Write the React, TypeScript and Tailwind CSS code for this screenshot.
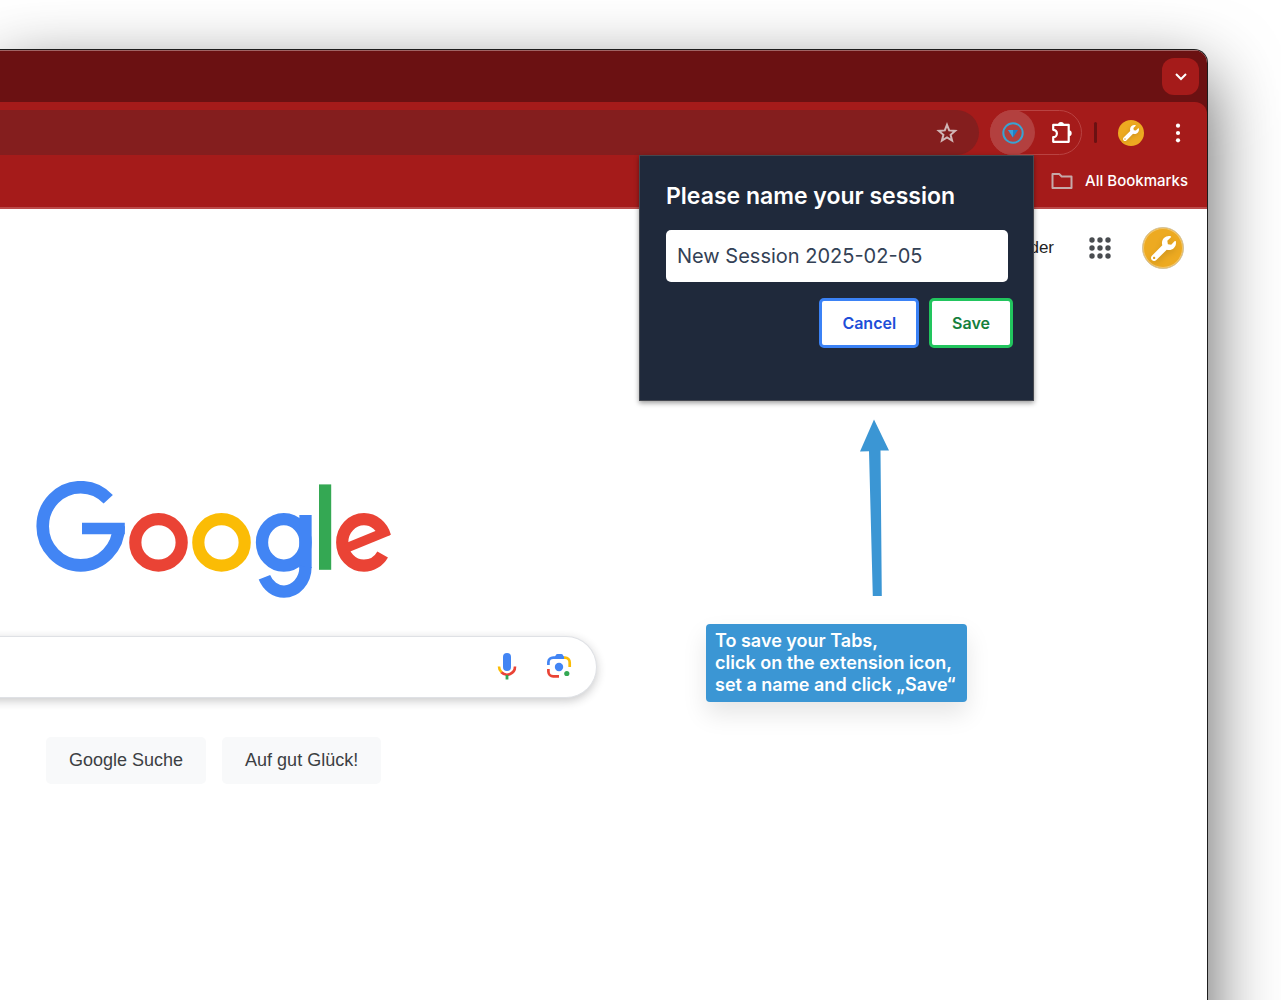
import { useState } from "react";
import { FaWrench } from "react-icons/fa";

const dots = [4, 12, 20];

function GoogleLogo() {
  return (
    <svg viewBox="36 481 355 117" className="h-[117px] w-[355px]" fill="none" role="img" aria-label="Google">
      <g stroke="#4285f4">
        <ellipse cx="80.7" cy="526.3" rx="38" ry="39.1" strokeWidth="12.6" pathLength="360" strokeDasharray="316 44" />
        <line x1="82" y1="528.5" x2="124.8" y2="528.5" strokeWidth="11.6" />
      </g>
      <circle cx="158.5" cy="542.4" r="23.2" stroke="#ea4335" strokeWidth="12.2" />
      <circle cx="221.5" cy="542.4" r="23.2" stroke="#fbbc05" strokeWidth="12.2" />
      <g stroke="#4285f4" strokeWidth="12.3">
        <ellipse cx="283.8" cy="542.4" rx="21.8" ry="23.2" />
        <line x1="305.5" y1="515" x2="305.5" y2="568" />
        <ellipse cx="284" cy="567" rx="21.5" ry="24.6" pathLength="360" strokeDasharray="154 206" />
      </g>
      <rect x="319" y="484.4" width="12.2" height="85.4" fill="#34a853" />
      <g stroke="#ea4335">
        <ellipse
          cx="364"
          cy="542.4"
          rx="21.8"
          ry="23.2"
          strokeWidth="12.2"
          pathLength="360"
          strokeDasharray="312 48"
          strokeDashoffset="-32"
        />
        <line x1="346" y1="548.2" x2="388.2" y2="530.8" strokeWidth="9.4" />
      </g>
    </svg>
  );
}

function MicIcon() {
  return (
    <svg viewBox="0 0 20 28" className="h-7 w-5" fill="none">
      <rect x="6" y="0" width="8" height="18" rx="4" fill="#4285f4" />
      <path d="M2 13.5a8 8 0 0 0 2.6 5.9" stroke="#fbbc05" strokeWidth="2.6" />
      <path d="M4.4 19.3A8 8 0 0 0 18 13.5" stroke="#ea4335" strokeWidth="2.6" />
      <path d="M10 22V26.5" stroke="#34a853" strokeWidth="2.8" />
    </svg>
  );
}

function LensIcon() {
  return (
    <svg viewBox="0 1 26 26" className="size-[26px]" fill="none">
      <path d="M2.4 12V9A4.8 4.8 0 0 1 7.2 4.6H18" stroke="#4285f4" strokeWidth="2.7" />
      <path d="M8 5l1.6-2.6Q10.3 1 11.6 1h3.6q1.3 0 2 1.4L18 5z" fill="#4285f4" />
      <path d="M18 4.6h1A4.8 4.8 0 0 1 23.7 9.4V14" stroke="#fbbc05" strokeWidth="2.7" />
      <path d="M2.4 16v2.8a4.8 4.8 0 0 0 4.8 4.6H13" stroke="#ea4335" strokeWidth="2.7" />
      <circle cx="13" cy="14" r="4.2" fill="#4285f4" />
      <circle cx="20.8" cy="20.5" r="2.6" fill="#34a853" />
    </svg>
  );
}

function StarIcon() {
  return (
    <svg viewBox="0 0 24 24" className="size-6" fill="none" stroke="#d0b5b5" strokeWidth="2">
      <path d="M12 3.800l2.200 5.600 6 .5-4.600 3.900 1.500 5.900-5.100-3.200-5.100 3.200 1.500-5.900-4.600-3.900 6-.5z" />
    </svg>
  );
}

function PuzzleIcon() {
  return (
    <svg viewBox="0 0 24 24" className="size-6" fill="none">
      <path
        d="M3.2 3.9H18.7V20.8H3.2V16.2A3.6 3.6 0 0 0 3.2 8.8Z"
        stroke="#fff"
        strokeWidth="2.2"
        strokeLinejoin="round"
      />
      <path d="M8 3.9a3 3 0 0 1 6 0zM18.7 9.3a3 3 0 0 1 0 6z" fill="#fff" />
    </svg>
  );
}

export default function App() {
  const [name, setName] = useState("New Session 2025-02-05");

  return (
    <div className="flex min-h-screen flex-col overflow-hidden bg-white pt-[49px] font-['Inter','Liberation_Sans',sans-serif]">
      <div className="relative -mb-24 mr-[73px] flex flex-1 flex-col rounded-tr-[14px] border-r border-t border-[#1c1c1c] bg-white shadow-[0_26px_70px_rgba(0,0,0,0.65)]">
        <header className="overflow-hidden rounded-tr-[13px] border-b-2 border-[#bb4b4a] bg-[#6b1112]">
          <div className="flex h-[52px] items-center justify-end border-t border-[#a06565] pr-2">
            <button aria-label="Search tabs" className="flex size-[37px] items-center justify-center rounded-xl bg-[#a51b1a]">
              <svg viewBox="0 0 12 8" className="h-2 w-3" fill="none" stroke="#fff" strokeWidth="2">
                <path d="M1 1l5 5 5-5" />
              </svg>
            </button>
          </div>
          <div className="rounded-tr-xl bg-[#a51b1a]">
            <div className="flex items-center pt-2">
              <div className="flex h-[45px] flex-1 items-center justify-end rounded-r-full bg-[#841e1e] pr-5">
                <button aria-label="Bookmark this tab">
                  <StarIcon />
                </button>
              </div>
              <div className="ml-[11px] flex h-[45px] w-[92px] items-center rounded-full border border-[#b94342]">
                <button
                  aria-label="Session extension"
                  className="-ml-px flex size-[45px] shrink-0 items-center justify-center rounded-full bg-[#b3403f]"
                >
                  <svg viewBox="0 0 22 22" className="size-[22px]" fill="none">
                    <circle cx="11" cy="11" r="9.7" stroke="#38a3d3" strokeWidth="2" />
                    <path d="M6 8h10l-5 7.5z" fill="#1f7fc6" />
                    <path d="M6 8h5v7.5z" fill="#3a9fdc" />
                  </svg>
                </button>
                <button aria-label="Extensions" className="flex flex-1 justify-center pl-2">
                  <PuzzleIcon />
                </button>
              </div>
              <div className="ml-3 h-[21px] w-[3px] rounded-full bg-[#6b1112]" />
              <button
                aria-label="Profile"
                className="ml-[21px] flex size-[26px] items-center justify-center rounded-full bg-[#edaa21]"
              >
                <FaWrench className="size-4 text-white drop-shadow-sm" />
              </button>
              <button aria-label="Menu" className="ml-[22px] mr-[17px] flex w-6 justify-center">
                <svg viewBox="0 0 24 24" className="size-6" fill="#fff">
                  {dots.map((y) => (
                    <circle key={y} cx="12" cy={12 + (y - 12) * 0.91} r="2.1" />
                  ))}
                </svg>
              </button>
            </div>
            <div className="flex h-[52px] items-center justify-end pr-[19px]">
              <button className="flex items-center gap-3 text-[15px] font-medium text-white">
                <svg viewBox="0 0 22 18" className="h-[18px] w-[22px]" fill="none" stroke="#c6a9a8" strokeWidth="2">
                  <path d="M1.5 2h6.7l2.5 2.5h9.8v11.5h-19z" strokeLinejoin="round" />
                </svg>
                All Bookmarks
              </button>
            </div>
          </div>
        </header>

        <nav className="flex h-[78px] items-center justify-end pr-[23px]">
          <a href="#bilder" className="font-['Liberation_Sans',sans-serif] text-[17px] text-[#222]">
            Bilder
          </a>
          <button aria-label="Google apps" className="ml-[34px]">
            <svg viewBox="0 0 24 24" className="size-6" fill="#494c50">
              {dots.map((y) => dots.map((x) => <circle key={`${x}-${y}`} cx={x} cy={y} r="2.7" />))}
            </svg>
          </button>
          <button
            aria-label="Google account"
            className="ml-[30px] flex size-[42px] items-center justify-center rounded-full border border-[#d5c39a] bg-[#edaa21] shadow-[inset_0_0_0_1px_#f3c66b]"
          >
            <FaWrench className="size-[25px] text-white drop-shadow-md" />
          </button>
        </nav>

        <main className="flex flex-col pt-[194px] font-['Liberation_Sans',Arial,sans-serif]">
          <div className="pl-9">
            <GoogleLogo />
          </div>
          <div className="-ml-4 mt-[38px] flex h-[62px] w-[613px] items-center rounded-r-full border border-l-0 border-[#dfe1e5] bg-white pr-6 shadow-[0_3px_10px_rgba(32,33,36,0.24)]">
            <input aria-label="Suche" className="h-full min-w-0 flex-1 bg-transparent px-8 text-lg outline-none" />
            <button aria-label="Sprachsuche">
              <MicIcon />
            </button>
            <button aria-label="Bildersuche" className="ml-[29px]">
              <LensIcon />
            </button>
          </div>
          <div className="mt-[39px] flex gap-4 pl-[46px] text-[18px] text-[#3c4043]">
            <button className="h-[47px] rounded-[5px] bg-[#f8f9fa] px-[23px]">Google Suche</button>
            <button className="h-[47px] rounded-[5px] bg-[#f8f9fa] px-[23px]">Auf gut Glück!</button>
          </div>
        </main>

        <div className="absolute right-[173px] top-[105px] flex w-[395px] flex-col">
          <form
            className="border border-[#45484f] bg-[#1f293b] pb-[52px] pl-[26px] pr-5 pt-6 shadow-[0_2px_5px_rgba(0,0,0,0.4)]"
            onSubmit={(e) => e.preventDefault()}
          >
            <label htmlFor="session-name" className="block text-[23px] font-semibold leading-8 text-white">
              Please name your session
            </label>
            <input
              id="session-name"
              value={name}
              onChange={(e) => setName(e.target.value)}
              className="mt-[18px] block h-[52px] w-[342px] rounded-[5px] bg-white px-[11px] text-[20px] text-[#334155] outline-none"
            />
            <div className="mt-4 flex justify-end gap-[10px] text-[16px] font-semibold">
              <button type="button" className="h-[50px] rounded-[5px] border-3 border-[#3b82f6] bg-white px-5 text-[#1d4ed8]">
                Cancel
              </button>
              <button type="submit" className="h-[50px] rounded-[5px] border-3 border-[#22c55e] bg-white px-5 text-[#15803d]">
                Save
              </button>
            </div>
          </form>
          <svg viewBox="0 0 30 178" className="ml-[220px] mt-[18px] h-[178px] w-[30px]" fill="#3b96d4">
            <path d="M15 0.5L30 31.5l-8.5 0L22.8 177h-9L10 32.3l-9 0.2z" />
          </svg>
          <p className="ml-[67px] mt-[27px] w-[261px] whitespace-nowrap rounded-[4px] bg-[#3b96d4] px-[9px] py-[6px] text-[18px] font-semibold leading-[22px] text-white shadow-[0_12px_24px_rgba(0,0,0,0.1)]">
            To save your Tabs,
            <br />
            click on the extension icon,
            <br />
            set a name and click „Save“
          </p>
        </div>
      </div>
    </div>
  );
}
